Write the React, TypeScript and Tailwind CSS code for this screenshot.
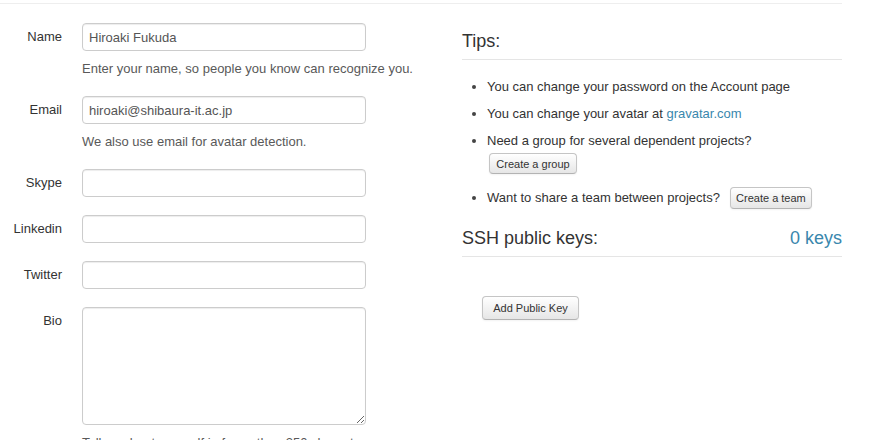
import React from 'react'

const font = { fontFamily: '"Liberation Sans", Arial, Helvetica, sans-serif' }

function Field({ label, value, help, area }: { label: string; value?: string; help?: string; area?: boolean }) {
    return (
        <div className="flex items-start mb-[18px]">
            <label className="w-[62px] shrink-0 text-right pt-[5px] leading-[18px] text-[13px] text-[#333]">{label}</label>
            <div className="ml-[20px] w-[284px]">
                {area ? (
                    <textarea className="block w-[284px] h-[118px] border border-[#ccc] rounded-[4px] shadow-[inset_0_1px_1px_rgba(0,0,0,0.075)] px-[6px] py-[4px] text-[13px] text-[#555] outline-none" />
                ) : (
                    <input
                        defaultValue={value}
                        className="block w-[284px] h-[28px] border border-[#ccc] rounded-[4px] shadow-[inset_0_1px_1px_rgba(0,0,0,0.075)] px-[6px] text-[13px] text-[#555] outline-none"
                    />
                )}
                {help && <p className="mt-[9px] leading-[18px] text-[13px] text-[#595959] whitespace-nowrap">{help}</p>}
            </div>
        </div>
    )
}

function Btn({ children, w, h }: { children: React.ReactNode; w: string; h: string }) {
    return (
        <button className={`${w} ${h} inline-flex items-center justify-center text-[11px] text-[#333] rounded-[4px] border border-[#c5c5c5] border-b-[#b3b3b3] bg-gradient-to-b from-white to-[#e6e6e6] shadow-[inset_0_1px_0_rgba(255,255,255,0.2),0_1px_2px_rgba(0,0,0,0.05)]`}>
            {children}
        </button>
    )
}

function Dot() {
    return (
        <span className="w-[25px] h-[18px] shrink-0 flex items-center pl-[10px]">
            <span className="w-[4px] h-[4px] rounded-full bg-[#444]" />
        </span>
    )
}

export default function App() {
    return (
        <div className="w-[876px] h-[440px] overflow-hidden bg-white text-[#333]" style={font}>
            <div className="w-[842px] h-[4px] border-b border-[#eee]" />
            <div className="flex">
                {/* profile form */}
                <div className="w-[366px] pt-[19px]">
                    <Field label="Name" value="Hiroaki Fukuda" help="Enter your name, so people you know can recognize you." />
                    <Field label="Email" value="hiroaki@shibaura-it.ac.jp" help="We also use email for avatar detection." />
                    <Field label="Skype" />
                    <Field label="Linkedin" />
                    <Field label="Twitter" />
                    <Field label="Bio" area help="Tell us about yourself in fewer than 250 characters." />
                </div>

                {/* tips and keys */}
                <div className="ml-[96px] w-[380px] pt-[27px]">
                    <h3 className="text-[18px] leading-[20px] pb-[8px] border-b border-[#e5e5e5]">Tips:</h3>
                    <ul className="mt-[18px] text-[13px] leading-[18px]">
                        <li className="flex mb-[9px]">
                            <Dot />
                            <span>You can change your password on the Account page</span>
                        </li>
                        <li className="flex mb-[9px]">
                            <Dot />
                            <span>
                                You can change your avatar at <a className="text-[#3a87ad]">gravatar.com</a>
                            </span>
                        </li>
                        <li className="flex">
                            <Dot />
                            <div>
                                <div>Need a group for several dependent projects?</div>
                                <div className="mt-[3px] ml-[2px]">
                                    <Btn w="w-[88px]" h="h-[21px]">Create a group</Btn>
                                </div>
                            </div>
                        </li>
                        <li className="flex items-center mt-[13px] h-[22px]">
                            <Dot />
                            <span>Want to share a team between projects?</span>
                            <span className="ml-[10px]">
                                <Btn w="w-[82px]" h="h-[22px]">Create a team</Btn>
                            </span>
                        </li>
                    </ul>
                    <div className="mt-[19px] flex justify-between text-[18px] leading-[20px] pb-[8px] border-b border-[#e5e5e5]">
                        <h3>SSH public keys:</h3>
                        <span className="text-[#3a87ad]">0 keys</span>
                    </div>
                    <div className="mt-[38px] ml-[20px]">
                        <Btn w="w-[97px]" h="h-[24px]">Add Public Key</Btn>
                    </div>
                </div>
            </div>
        </div>
    )
}
